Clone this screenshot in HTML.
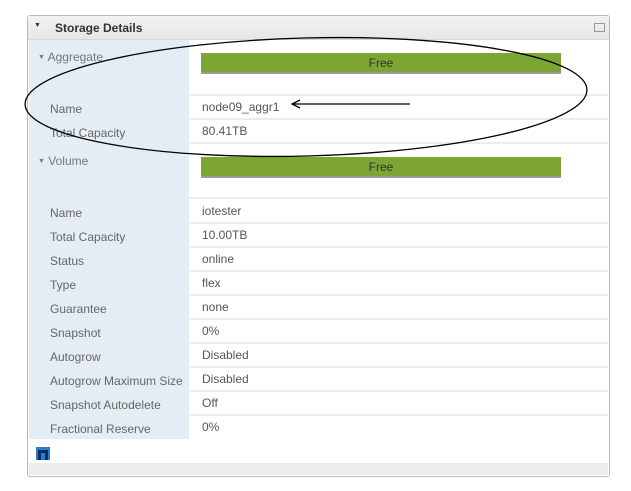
<!DOCTYPE html>
<html><head><style>
body{margin:0;width:631px;height:491px;background:#fff;font-family:"Liberation Sans",sans-serif;font-size:12px;position:relative;overflow:hidden}
.p{position:absolute;left:27px;top:15px;width:581px;height:460px;border:1px solid #b8b8b8;border-radius:3px;background:#fff}
.h{position:absolute;left:0;top:0;width:581px;height:23px;background:linear-gradient(#f2f2f2,#e6e6e6);border-bottom:1px solid #d6d6d6;font-weight:bold;color:#333;font-size:12px}
.lc{position:absolute;left:1px;top:24px;width:160px;height:399px;background:#e3edf5}
.r{position:absolute;left:1px;width:579px;border-bottom:2px solid #ececec;height:22px}
.l{position:absolute;left:21px;top:6px;color:#666}
.v{position:absolute;left:173px;top:4px;color:#555}
.g{position:absolute;left:173px;width:360px;height:19px;background:#7da534;border-bottom:2px solid #9a9a9a;color:#333;text-align:center;line-height:21px}
.f{position:absolute;left:1px;top:447px;width:579px;height:12px;background:#ececec}
</style></head><body>
<div class="p">
<div class="h"><span style="position:absolute;left:6px;top:6px;font-size:7px">▼</span><span style="position:absolute;left:27px;top:5px">Storage Details</span><span style="position:absolute;right:4px;top:7px;width:9px;height:7px;border:1px solid #999"></span></div>
<div class="lc"></div>
<div style="position:absolute;left:10px;top:34px;color:#777"><span style="font-size:7px;vertical-align:2px">▼</span> Aggregate</div>
<div class="g" style="top:37px">Free</div>
<div class="r" style="top:56px;height:22px"></div>
<div class="r" style="top:80px"><span class="l">Name</span><span class="v">node09_aggr1</span></div>
<div class="r" style="top:104px"><span class="l">Total Capacity</span><span class="v">80.41TB</span></div>
<div style="position:absolute;left:10px;top:138px;color:#777"><span style="font-size:7px;vertical-align:2px">▼</span> Volume</div>
<div class="g" style="top:141px">Free</div>
<div class="r" style="top:159px"></div>
<div class="r" style="top:184px"><span class="l">Name</span><span class="v">iotester</span></div>
<div class="r" style="top:208px"><span class="l">Total Capacity</span><span class="v">10.00TB</span></div>
<div class="r" style="top:232px"><span class="l">Status</span><span class="v">online</span></div>
<div class="r" style="top:256px"><span class="l">Type</span><span class="v">flex</span></div>
<div class="r" style="top:280px"><span class="l">Guarantee</span><span class="v">none</span></div>
<div class="r" style="top:304px"><span class="l">Snapshot</span><span class="v">0%</span></div>
<div class="r" style="top:328px"><span class="l">Autogrow</span><span class="v">Disabled</span></div>
<div class="r" style="top:352px"><span class="l">Autogrow Maximum Size</span><span class="v">Disabled</span></div>
<div class="r" style="top:376px"><span class="l">Snapshot Autodelete</span><span class="v">Off</span></div>
<div class="r" style="top:400px;border:none"><span class="l">Fractional Reserve</span><span class="v">0%</span></div>
<svg style="position:absolute;left:8px;top:431px" width="14" height="13"><rect width="14" height="13" fill="#2a7ad0"/><path d="M2 13V3h10v10h-3V6H5v7z" fill="#0c2f5a"/></svg>
<div class="f"></div>
</div>
<svg width="631" height="491" style="position:absolute;left:0;top:0">
<ellipse cx="306" cy="97" rx="281" ry="59" transform="rotate(-1.5 306 97)" fill="none" stroke="#000" stroke-width="1.3"/>
<line x1="292" y1="104" x2="410" y2="104" stroke="#000" stroke-width="1.3"/>
<path d="M300 100 L292 104 L300 108" fill="none" stroke="#000" stroke-width="1.3"/>
</svg>
</body></html>
